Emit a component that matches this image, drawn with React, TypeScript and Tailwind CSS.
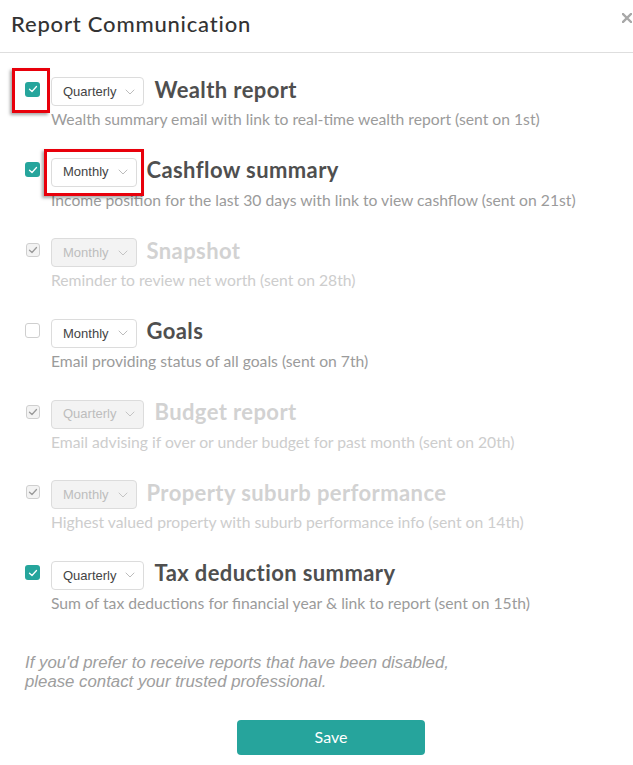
import React from "react";

type Row = {
  freq: "Quarterly" | "Monthly";
  title: string;
  desc: string;
  state: "checked" | "unchecked" | "disabled";
  mark?: "check" | "select";
};

const rows: Row[] = [
  { freq: "Quarterly", title: "Wealth report", desc: "Wealth summary email with link to real-time wealth report (sent on 1st)", state: "checked", mark: "check" },
  { freq: "Monthly", title: "Cashflow summary", desc: "Income position for the last 30 days with link to view cashflow (sent on 21st)", state: "checked", mark: "select" },
  { freq: "Monthly", title: "Snapshot", desc: "Reminder to review net worth (sent on 28th)", state: "disabled" },
  { freq: "Monthly", title: "Goals", desc: "Email providing status of all goals (sent on 7th)", state: "unchecked" },
  { freq: "Quarterly", title: "Budget report", desc: "Email advising if over or under budget for past month (sent on 20th)", state: "disabled" },
  { freq: "Monthly", title: "Property suburb performance", desc: "Highest valued property with suburb performance info (sent on 14th)", state: "disabled" },
  { freq: "Quarterly", title: "Tax deduction summary", desc: "Sum of tax deductions for financial year & link to report (sent on 15th)", state: "checked" },
];

function Check({ color }: { color: string }) {
  return (
    <svg width="10" height="8" viewBox="0 0 10 8" fill="none">
      <path d="M1.5 4.2 L4 6.5 L8.5 1.5" stroke={color} strokeWidth="1.3" strokeLinecap="round" strokeLinejoin="round" />
    </svg>
  );
}

function Checkbox({ state }: { state: Row["state"] }) {
  if (state === "checked")
    return (
      <div className="w-[15px] h-[15px] rounded-[3px] bg-[#26a59c] flex items-center justify-center">
        <Check color="#ffffff" />
      </div>
    );
  if (state === "disabled")
    return (
      <div className="w-[14px] h-[14px] rounded-[3px] bg-[#f3f3f3] border border-[#cfcfcf] flex items-center justify-center">
        <Check color="#9a9a9a" />
      </div>
    );
  return <div className="w-[15px] h-[15px] rounded-[3px] bg-white border border-[#cfcfcf]" />;
}

function Chevron({ color }: { color: string }) {
  return (
    <svg width="10" height="6" viewBox="0 0 10 6" fill="none">
      <path d="M1 1 L5 5 L9 1" stroke={color} strokeWidth="1" strokeLinecap="round" strokeLinejoin="round" />
    </svg>
  );
}

function Select({ freq, disabled }: { freq: string; disabled: boolean }) {
  return (
    <div
      className={
        disabled
          ? "h-[29px] flex items-center gap-[9px] pl-[11px] pr-[8px] rounded-[4px] border border-[#dcdcdc] bg-[#f3f3f3]"
          : "h-[29px] flex items-center gap-[9px] pl-[11px] pr-[8px] rounded-[4px] border border-[#dcdcdc] bg-white"
      }
    >
      <span
        className={disabled ? "text-[13px] text-[#bdbdbd]" : "text-[13px] text-[#444444]"}
        style={{ fontFamily: '"Liberation Sans", Arial, sans-serif' }}
      >
        {freq}
      </span>
      <Chevron color={disabled ? "#c4c4c4" : "#bcbcbc"} />
    </div>
  );
}

export default function App() {
  return (
    <div
      className="w-[633px] h-[765px] bg-white overflow-hidden flex flex-col"
      style={{ fontFamily: 'Lato, "Noto Sans", sans-serif' }}
    >
      <div className="h-[53px] flex items-center justify-between pl-[11px] pr-[1px] border-b border-[#dedede] shrink-0">
        <h1 className="text-[22px] font-medium text-[#333333] tracking-[0.8px] mt-[-5px]">Report Communication</h1>
        <svg width="10" height="10" viewBox="0 0 10 10" className="mt-[-16px]">
          <path d="M1 1 L9 9 M9 1 L1 9" stroke="#a8a8a8" strokeWidth="2.4" strokeLinecap="square" />
        </svg>
      </div>

      <div className="flex flex-col gap-[28.67px] pt-[24px] pl-[25px]">
        {rows.map((r) => {
          const disabled = r.state === "disabled";
          return (
            <div key={r.title} className="flex flex-col">
              <div className="flex items-center h-[29px]">
                <div className="relative w-[15px] flex justify-center mt-[-5px]">
                  <Checkbox state={r.state} />
                  {r.mark === "check" && (
                    <div className="absolute left-[-13px] right-[-10px] top-[-14px] bottom-[-16px] border-[3px] border-[#e8000b] shadow-[-2px_2px_3px_rgba(0,0,0,0.35)]" />
                  )}
                </div>
                <div className="relative ml-[11px]">
                  <Select freq={r.freq} disabled={disabled} />
                  {r.mark === "select" && (
                    <div className="absolute left-[-7px] right-[-7px] top-[-9px] bottom-[-9px] border-[3px] border-[#e8000b] shadow-[-2px_2px_3px_rgba(0,0,0,0.35)]" />
                  )}
                </div>
                <span
                  className={
                    disabled
                      ? "ml-[10px] text-[22px] tracking-[0.4px] font-bold text-[#d2d2d2] mt-[-5px]"
                      : "ml-[10px] text-[22px] tracking-[0.4px] font-bold text-[#4f4f4f] mt-[-5px]"
                  }
                >
                  {r.title}
                </span>
              </div>
              <p
                className={
                  disabled
                    ? "ml-[26px] mt-[3px] text-[15.7px] leading-[20px] text-[#cdcdcd]"
                    : "ml-[26px] mt-[3px] text-[15.7px] leading-[20px] text-[#9b9b9b]"
                }
              >
                {r.desc}
              </p>
            </div>
          );
        })}
      </div>

      <p
        className="mt-[40px] pl-[25px] text-[16.8px] leading-[19px] italic text-[#9e9e9e]"
        style={{ fontFamily: '"Liberation Sans", Arial, sans-serif' }}
      >
        If you'd prefer to receive reports that have been disabled,
        <br />
        please contact your trusted professional.
      </p>

      <div className="flex mt-[29px] pl-[237px]">
        <button className="w-[188px] h-[35px] rounded-[4px] bg-[#26a49c] text-white text-[16px]">Save</button>
      </div>
    </div>
  );
}
